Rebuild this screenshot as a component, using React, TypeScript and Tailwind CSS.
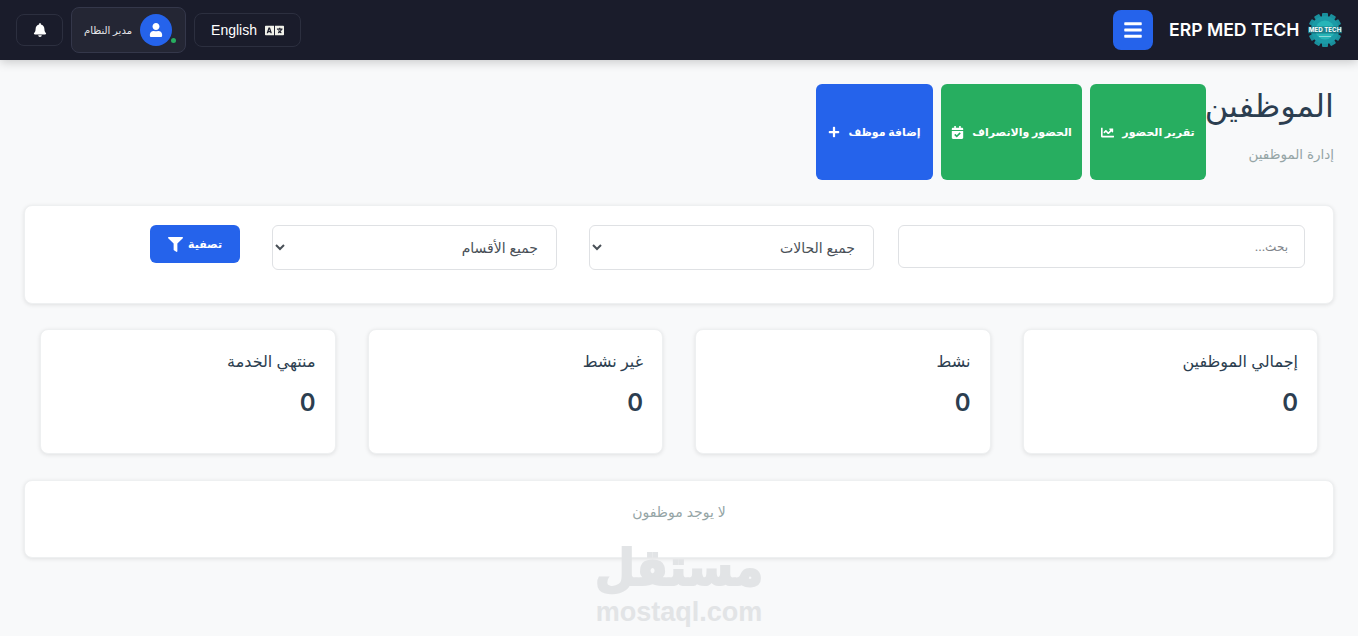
import { FaBars, FaBell, FaCalendarCheck, FaChartLine, FaFilter, FaLanguage, FaPlus, FaUser } from "react-icons/fa";

const FONT = "font-['Inter','Noto_Sans','DejaVu_Sans',sans-serif]";

const STATS = ["إجمالي الموظفين", "نشط", "غير نشط", "منتهي الخدمة"];

function Logo() {
  const teeth = Array.from({ length: 12 }, (_, i) => i * 30);
  return (
    <svg width="34" height="34" viewBox="0 0 34 34" className="shrink-0">
      {teeth.map((deg) => (
        <rect key={deg} x="14" y="0" width="6" height="6" rx="1" fill="#1a8f9c" transform={`rotate(${deg} 17 17)`} />
      ))}
      <circle cx="17" cy="17" r="14" fill="#1b9aa6" />
      <circle cx="17" cy="17" r="9.5" fill="#27b5b8" />
      <rect x="0" y="13.5" width="34" height="7" fill="#14606e" opacity="0.6" />
      <rect x="11" y="23" width="12" height="1" fill="#b9e6e6" opacity="0.7" />
      <text x="17" y="19.4" textAnchor="middle" fontSize="6.2" fontWeight="700" fill="#ffffff" fontFamily="Inter, sans-serif">
        MED TECH
      </text>
    </svg>
  );
}

function Header() {
  return (
    <header className="flex h-[60px] items-center justify-between bg-[#1a1c2b] px-4 shadow-[0_2px_10px_rgba(0,0,0,0.2)]">
      <div className="flex items-center">
        <Logo />
        <span className="mr-[9px] w-[130px] font-['Inter',sans-serif] text-[17.6px] font-semibold whitespace-nowrap text-white" dir="ltr">
          ERP MED TECH
        </span>
        <button type="button" className="mr-4 flex h-10 w-10 items-center justify-center rounded-lg bg-[#2563eb] text-white">
          <FaBars size={20} />
        </button>
      </div>
      <div className="flex items-center gap-2">
        <button type="button" className="flex h-[34px] w-[107px] items-center justify-center gap-2 rounded-lg border border-[#2c2f3f] text-white">
          <FaLanguage size={19} className="text-[#f1f1ea]" />
          <span className="font-['Liberation_Sans',sans-serif] text-[14px]">English</span>
        </button>
        <div className="flex h-[46px] w-[115px] items-center gap-2 rounded-lg border border-[#34374a] bg-[#242634] pr-[13px]">
          <div className="relative flex h-8 w-8 shrink-0 items-center justify-center rounded-full bg-[#2563eb] text-white">
            <FaUser size={14} />
            <span className="absolute right-[-4px] bottom-[3px] h-[5px] w-[5px] rounded-full bg-[#27ae60]" />
          </div>
          <span className="text-[10px] whitespace-nowrap text-[#e8e8ea]">مدير النظام</span>
        </div>
        <button type="button" className="flex h-8 w-[47px] items-center justify-center rounded-lg border border-[#2c2f3f] text-white">
          <FaBell size={14} />
        </button>
      </div>
    </header>
  );
}

function PageTitle() {
  return (
    <div className="flex h-24 items-stretch">
      <div className="w-[128px]">
        <h1 className="text-[32px] leading-[44px] font-medium whitespace-nowrap text-[#2c3e50]">الموظفين</h1>
        <p className="mt-4 text-[13.5px] leading-5 text-[#95a5a6]">إدارة الموظفين</p>
      </div>
      <div className="flex gap-2">
        <button type="button" className="flex w-[116px] items-center justify-center gap-2 rounded-md bg-[#27ae60] text-[11px] font-bold text-white">
          <span>تقرير الحضور</span>
          <FaChartLine size={13} />
        </button>
        <button type="button" className="flex w-[141px] items-center justify-center gap-2 rounded-md bg-[#27ae60] text-[11px] font-bold text-white">
          <span>الحضور والانصراف</span>
          <FaCalendarCheck size={13} />
        </button>
        <button type="button" className="flex w-[117px] items-center justify-center gap-2 rounded-md bg-[#2563eb] text-[11px] font-bold text-white">
          <span>إضافة موظف</span>
          <FaPlus size={12} />
        </button>
      </div>
    </div>
  );
}

function Filters() {
  const field = "rounded-md border border-[#dfe1e4] bg-white text-[#495057]";
  return (
    <section className="mt-[25px] flex h-[99px] items-start rounded-lg border border-[#eef0f1] bg-white pt-[19px] pr-[28px] shadow-[0_1px_4px_rgba(0,0,0,0.1)]">
      <input placeholder="بحث..." className={`h-[43px] w-[407px] px-4 text-[12px] placeholder:text-[#80858a] ${field}`} />
      <select className={`mr-6 h-[45px] w-[285px] pr-[14px] pl-0 text-[14px] ${field}`} defaultValue="all">
        <option value="all">جميع الحالات</option>
      </select>
      <select className={`mr-8 h-[45px] w-[285px] pr-[14px] pl-0 text-[14px] ${field}`} defaultValue="all">
        <option value="all">جميع الأقسام</option>
      </select>
      <button type="button" className="mr-8 flex h-[38px] w-[90px] items-center justify-center gap-[5px] rounded-md bg-[#2563eb] text-[11px] font-bold text-white">
        <span>تصفية</span>
        <FaFilter size={15} />
      </button>
    </section>
  );
}

function Stats() {
  return (
    <section className="mt-[25px] grid grid-cols-4 gap-8 px-4">
      {STATS.map((label) => (
        <div key={label} className="h-[125px] rounded-lg border border-[#eef0f1] bg-white px-[19px] pt-[19px] shadow-[0_1px_4px_rgba(0,0,0,0.1)]">
          <h3 className="text-[16px] leading-6 font-medium text-[#2c3e50]">{label}</h3>
          <p className="mt-3 font-['Inter',sans-serif] text-[24px] leading-9 font-semibold text-[#2c3e50]">0</p>
        </div>
      ))}
    </section>
  );
}

function Watermark() {
  return (
    <div className="pointer-events-none absolute top-[540px] left-[597px] flex w-[164px] flex-col items-center text-[#e2e4e6]">
      <span className="mt-[3px] mb-[12px] scale-y-110 text-[46px] leading-[46px] font-bold whitespace-nowrap [-webkit-text-stroke:2px_#e2e4e6]">مستقل</span>
      <span className="mt-[-3px] font-['Liberation_Sans',sans-serif] text-[27px] leading-7 font-bold" dir="ltr">
        mostaql.com
      </span>
    </div>
  );
}

export default function App() {
  return (
    <div dir="rtl" className={`relative h-[636px] overflow-hidden bg-[#f8f9fa] ${FONT}`}>
      <Header />
      <main className="px-6 pt-6">
        <PageTitle />
        <Filters />
        <Stats />
        <section className="mt-[26px] h-[78px] rounded-lg border border-[#eef0f1] bg-white pt-[21px] text-center text-[14px] leading-5 text-[#95a5a6] shadow-[0_1px_4px_rgba(0,0,0,0.1)]">
          لا يوجد موظفون
        </section>
      </main>
      <Watermark />
    </div>
  );
}
